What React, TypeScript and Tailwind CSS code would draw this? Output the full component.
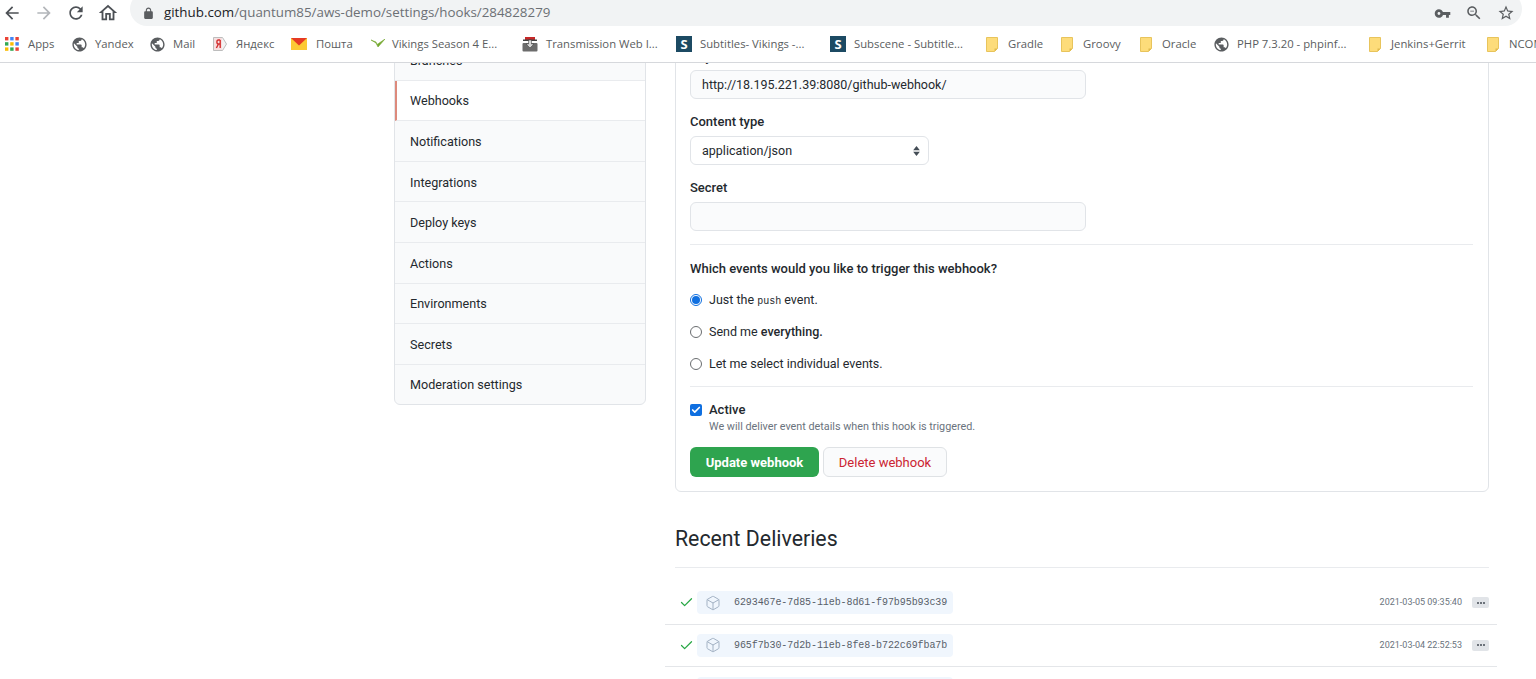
import React from "react"
import { Check, Box } from "lucide-react"

const ui = "font-['Open_Sans','Noto_Sans',sans-serif]"
const body = "font-['Roboto','Open_Sans',sans-serif]"

const Mat = ({ d, className }: { d: string; className: string }) => (
	<svg viewBox="0 0 24 24" className={className} fill="currentColor">
		<path d={d} />
	</svg>
)

const paths = {
	back: "M20 11H7.83l5.59-5.59L12 4l-8 8 8 8 1.41-1.41L7.83 13H20v-2z",
	forward: "M12 4l-1.41 1.41L16.17 11H4v2h12.17l-5.58 5.59L12 20l8-8z",
	reload:
		"M17.65 6.35C16.2 4.9 14.21 4 12 4c-4.42 0-7.99 3.58-7.99 8s3.57 8 7.99 8c3.73 0 6.84-2.55 7.73-6h-2.08c-.82 2.33-3.04 4-5.65 4-3.31 0-6-2.69-6-6s2.69-6 6-6c1.66 0 3.14.69 4.22 1.78L13 11h7V4l-2.35 2.35z",
	home: "M12 5.69l5 4.5V18h-2v-6H9v6H7v-7.81l5-4.5M12 3L2 12h3v8h6v-6h2v6h6v-8h3L12 3z",
	lock: "M18 8h-1V6c0-2.76-2.24-5-5-5S7 3.24 7 6v2H6c-1.1 0-2 .9-2 2v10c0 1.1.9 2 2 2h12c1.1 0 2-.9 2-2V10c0-1.1-.9-2-2-2zM9 6c0-1.66 1.34-3 3-3s3 1.34 3 3v2H9V6z",
	key: "M12.65 10C11.83 7.67 9.61 6 7 6c-3.31 0-6 2.69-6 6s2.69 6 6 6c2.61 0 4.83-1.67 5.65-4H17v4h4v-4h2v-4H12.65zM7 14c-1.1 0-2-.9-2-2s.9-2 2-2 2 .9 2 2-.9 2-2 2z",
	zoom: "M15.5 14h-.79l-.28-.27C15.41 12.59 16 11.11 16 9.5 16 5.91 13.09 3 9.5 3S3 5.91 3 9.5 5.91 16 9.5 16c1.61 0 3.09-.59 4.23-1.57l.27.28v.79l5 4.99L20.49 19l-4.99-5zm-6 0C7.01 14 5 11.99 5 9.5S7.01 5 9.5 5 14 7.01 14 9.5 11.99 14 9.5 14zM7 9h5v1H7z",
	star: "M22 9.24l-7.19-.62L12 2 9.19 8.63 2 9.24l5.46 4.73L5.82 21 12 17.27 18.18 21l-1.63-7.03L22 9.24zM12 15.4l-3.76 2.27 1-4.28-3.32-2.88 4.38-.38L12 6.1l1.71 4.04 4.38.38-3.32 2.88 1 4.28L12 15.4z",
	globe: "M12 2C6.48 2 2 6.48 2 12s4.48 10 10 10 10-4.48 10-10S17.52 2 12 2zm-1 17.93c-3.95-.49-7-3.85-7-7.93 0-.62.08-1.21.21-1.79L9 15v1c0 1.1.9 2 2 2v1.93zm6.9-2.54c-.26-.81-1-1.39-1.9-1.39h-1v-3c0-.55-.45-1-1-1H8v-2h2c.55 0 1-.45 1-1V7h2c1.1 0 2-.9 2-2v-.41c2.93 1.19 5 4.06 5 7.41 0 2.08-.8 3.97-2.1 5.39z",
}

const AppsIcon = () => (
	<svg viewBox="0 0 14 14" className="size-[14px] shrink-0">
		<rect x="0" y="0" width="3.4" height="3.4" fill="#ea4335" />
		<rect x="5.2" y="0" width="3.4" height="3.4" fill="#4285f4" />
		<rect x="10.4" y="0" width="3.4" height="3.4" fill="#ea4335" />
		<rect x="0" y="5.2" width="3.4" height="3.4" fill="#34a853" />
		<rect x="5.2" y="5.2" width="3.4" height="3.4" fill="#fbbc05" />
		<rect x="10.4" y="5.2" width="3.4" height="3.4" fill="#4285f4" />
		<rect x="0" y="10.4" width="3.4" height="3.4" fill="#fbbc05" />
		<rect x="5.2" y="10.4" width="3.4" height="3.4" fill="#34a853" />
		<rect x="10.4" y="10.4" width="3.4" height="3.4" fill="#ea4335" />
	</svg>
)

const Globe = () => <Mat d={paths.globe} className="size-[17px] shrink-0 text-[#5a5d60]" />

const YandexIcon = () => (
	<svg viewBox="0 0 16 16" className="size-4 shrink-0">
		<path d="M1.5 1.5h9l4 6.5-4 6.5h-9z" fill="#f3f3f3" stroke="#bdbdbd" />
		<rect x="2" y="2" width="8" height="12" fill="#f7dfe0" />
		<path d="M8.2 4v8M8.2 4H6.4C4.4 4 4.4 8 6.4 8h1.8M6.4 8l-2 4" fill="none" stroke="#d32f2f" strokeWidth="1.4" />
	</svg>
)

const MailIcon = () => (
	<svg viewBox="0 0 16 12" className="h-3 w-4 shrink-0">
		<rect width="16" height="12" fill="#fcc934" />
		<path d="M0 0h16L8 7.5z" fill="#e53924" />
	</svg>
)

const VikingsIcon = () => (
	<svg viewBox="0 0 14 10" className="h-[10px] w-[14px] shrink-0">
		<path d="M0 1l5 3 2 4 7-8-6.5 4.5L6 5.5 5 3z" fill="#74a82f" stroke="#74a82f" strokeWidth="0.6" />
	</svg>
)

const TransmissionIcon = () => (
	<svg viewBox="0 0 16 16" className="size-4 shrink-0">
		<rect x="0.5" y="7" width="15" height="8.5" rx="1" fill="#6c6c6c" />
		<rect x="3" y="1" width="10" height="3" fill="#c62828" />
		<rect x="1" y="3.5" width="14" height="1.5" fill="#444" />
		<path d="M6.5 4h3v4h2.5L8 12 4 8h2.5z" fill="#d8d8d8" stroke="#333" strokeWidth="0.5" />
	</svg>
)

const SubIcon = () => (
	<span className="flex size-4 shrink-0 items-center justify-center bg-[#1c4a63] text-[13px] leading-none font-bold text-white">
		S
	</span>
)

const NoteIcon = () => (
	<svg viewBox="0 0 12 15" className="h-[15px] w-3 shrink-0">
		<path d="M0.5 0.5h11v11l-3 3h-8z" fill="#fdd663" fillOpacity="0.85" stroke="#e8c45c" />
		<path d="M11.5 11.5h-3v3z" fill="#e0b94c" />
	</svg>
)

const bookmarks = [
	{ label: "Apps", icon: <AppsIcon />, cls: "w-[71px] gap-[9px] pl-[5px]" },
	{ label: "Yandex", icon: <Globe />, cls: "w-[78px] gap-[7px]" },
	{ label: "Mail", icon: <Globe />, cls: "w-[63px] gap-[7px]" },
	{ label: "Яндекс", icon: <YandexIcon />, cls: "w-[79px] gap-[8px]" },
	{ label: "Пошта", icon: <MailIcon />, cls: "w-[80px] gap-[9px]" },
	{ label: "Vikings Season 4 E...", icon: <VikingsIcon />, cls: "w-[151px] gap-[7px]" },
	{ label: "Transmission Web I...", icon: <TransmissionIcon />, cls: "w-[154px] gap-[8px]" },
	{ label: "Subtitles- Vikings -...", icon: <SubIcon />, cls: "w-[154px] gap-[8px]" },
	{ label: "Subscene - Subtitle...", icon: <SubIcon />, cls: "w-[156px] gap-[8px]" },
	{ label: "Gradle", icon: <NoteIcon />, cls: "w-[75px] gap-[10px]" },
	{ label: "Groovy", icon: <NoteIcon />, cls: "w-[79px] gap-[10px]" },
	{ label: "Oracle", icon: <NoteIcon />, cls: "w-[73px] gap-[10px]" },
	{ label: "PHP 7.3.20 - phpinf...", icon: <Globe />, cls: "w-[156px] gap-[7px]" },
	{ label: "Jenkins+Gerrit", icon: <NoteIcon />, cls: "w-[118px] gap-[10px]" },
	{ label: "NCOM", icon: <NoteIcon />, cls: "w-[60px] gap-[10px]" },
]

const BrowserBar = () => (
	<div className={`${ui} shrink-0 border-b border-[#d6d8dc] bg-white`}>
		<div className="flex h-[26px] items-center overflow-hidden">
			<div className="-mt-px flex w-[130px] shrink-0 items-center pl-[2px]">
				<Mat d={paths.back} className="size-5 text-[#4d5156]" />
				<Mat d={paths.forward} className="ml-3 size-5 text-[#b3b6ba]" />
				<Mat d={paths.reload} className="ml-3 size-5 text-[#4d5156]" />
				<Mat d={paths.home} className="ml-[11px] size-[22px] text-[#4d5156]" />
			</div>
			<div className="-mt-2 flex h-[34px] w-[1392px] shrink-0 items-center rounded-full bg-[#f1f3f4] pt-2 pr-[7px] pl-[12px]">
				<Mat d={paths.lock} className="size-[13px] text-[#5a5d60]" />
				<span className="ml-[9px] text-[13.35px] leading-none text-[#6c7075]">
					<span className="text-[#202124]">github.com</span>/quantum85/aws-demo/settings/hooks/284828279
				</span>
				<div className="ml-auto flex items-center gap-[14px]">
					<Mat d={paths.key} className="size-[17px] text-[#5a5d60]" />
					<Mat d={paths.zoom} className="size-[18px] text-[#5a5d60]" />
					<Mat d={paths.star} className="size-[18px] text-[#5a5d60]" />
				</div>
			</div>
		</div>
		<div className="flex h-[36px] items-center overflow-hidden whitespace-nowrap">
			{bookmarks.map((b) => (
				<div key={b.label} className={`flex shrink-0 items-center text-[11.3px] text-[#5a5d60] ${b.cls}`}>
					{b.icon}
					<span>{b.label}</span>
				</div>
			))}
		</div>
	</div>
)

const menu = ["Branches", "Webhooks", "Notifications", "Integrations", "Deploy keys", "Actions", "Environments", "Secrets", "Moderation settings"]

const Sidebar = () => (
	<div className="w-[252px] shrink-0 self-start rounded-b-md border border-[#e1e4e8] bg-[#f9fafb]">
		{menu.map((item) => (
			<div
				key={item}
				className={`flex h-[40.6px] items-center border-b border-[#e9ebee] pt-[3px] text-[12.6px] text-[#24292e] last:h-[39px] last:border-b-0 ${
					item === "Webhooks" ? "border-l-2 border-l-[#dd8a7c] bg-white pl-[13px]" : "pl-[15px]"
				}`}>
				{item}
			</div>
		))}
	</div>
)

const fieldCls = "flex h-[29px] items-center rounded-md border border-[#e1e4e8] px-[11px] pt-px text-[12.5px] text-[#24292e]"

const Radio = ({ checked, children }: { checked?: boolean; children: React.ReactNode }) => (
	<div className="flex h-[18px] items-center gap-[7px] text-[12.5px] text-[#24292e]">
		{checked ? (
			<span className="flex size-3 items-center justify-center rounded-full border border-[#0f6fe0] bg-white">
				<span className="size-2 rounded-full bg-[#0f6fe0]" />
			</span>
		) : (
			<span className="size-3 rounded-full border border-[#6a6d70] bg-white" />
		)}
		<span>{children}</span>
	</div>
)

const labelCls = "text-[13px] leading-[18px] font-medium text-[#24292e]"

const WebhookForm = () => (
	<div className="rounded-b-md border border-[#e1e4e8] pr-[15px] pb-[14px] pl-[14px]">
		<div className="flex h-[30px] items-end pb-[4px] text-[13px] font-medium text-[#24292e]">Payload URL</div>
		<div className={`${fieldCls} w-[396px] bg-[#fafbfc]`}>http://18.195.221.39:8080/github-webhook/</div>
		<div className={`mt-[14px] ${labelCls}`}>Content type</div>
		<div className={`${fieldCls} mt-[5px] w-[239px] justify-between bg-white pr-[8px]`}>
			application/json
			<svg viewBox="0 0 8 12" className="h-[10px] w-[7px] text-[#444d56]" fill="currentColor">
				<path d="M4 0l4 5H0zM4 12L0 7h8z" />
			</svg>
		</div>
		<div className={`mt-[14px] ${labelCls}`}>Secret</div>
		<div className={`${fieldCls} mt-[5px] w-[396px] bg-[#fafbfc]`} />
		<div className="mt-[13px] border-t border-[#e9ebee]" />
		<div className={`mt-[15px] ${labelCls}`}>Which events would you like to trigger this webhook?</div>
		<div className="mt-[13px] flex flex-col gap-[14px]">
			<Radio checked>
				Just the <span className="font-['Liberation_Mono',monospace] text-[10px]">push</span> event.
			</Radio>
			<Radio>
				Send me <span className="font-medium">everything.</span>
			</Radio>
			<Radio>Let me select individual events.</Radio>
		</div>
		<div className="mt-[13px] border-t border-[#e9ebee]" />
		<div className={`mt-[14px] flex h-[18px] items-center gap-[7px] ${labelCls}`}>
			<span className="flex size-3 items-center justify-center rounded-[2px] bg-[#0f6fe0]">
				<Check className="size-[10px] text-white" strokeWidth={4} />
			</span>
			Active
		</div>
		<div className="mt-px pl-[19px] text-[10.8px] leading-[14px] text-[#6a737d]">We will deliver event details when this hook is triggered.</div>
		<div className="mt-[13px] flex gap-[4px]">
			<div className="flex h-[30px] w-[129px] items-center justify-center rounded-md bg-[#2ea44f] pt-px text-[13px] font-bold text-white">Update webhook</div>
			<div className="flex h-[30px] w-[124px] items-center justify-center rounded-md border border-[#dfe2e5] bg-[#fafbfc] pt-px text-[13px] text-[#cb2431]">Delete webhook</div>
		</div>
	</div>
)

const deliveries = [
	{ id: "6293467e-7d85-11eb-8d61-f97b95b93c39", at: "2021-03-05 09:35:40" },
	{ id: "965f7b30-7d2b-11eb-8fe8-b722c69fba7b", at: "2021-03-04 22:52:53" },
]

const Delivery = ({ id, at }: { id: string; at: string }) => (
	<div className="flex h-[42.5px] items-center border-b border-[#e4e6e9] pr-[8px] pl-[14px]">
		<Check className="size-[15px] text-[#28a745]" strokeWidth={2} />
		<div className="ml-[3px] flex h-[23px] w-[256px] items-center rounded-[4px] bg-[#f0f6fd] pl-[8px]">
			<Box className="size-[16px] text-[#a3b2c4]" strokeWidth={1.5} />
			<span className="ml-[13px] font-['Liberation_Mono',monospace] text-[10px] tracking-[-0.08px] text-[#586069]">{id}</span>
		</div>
		<span className="ml-auto text-[9px] text-[#6a737d]">{at}</span>
		<span className="ml-[10px] flex h-[11px] w-[17px] items-center justify-center gap-px rounded-[2px] bg-[#e1e4e8]">
			<span className="size-[2px] rounded-full bg-[#444d56]" />
			<span className="size-[2px] rounded-full bg-[#444d56]" />
			<span className="size-[2px] rounded-full bg-[#444d56]" />
		</span>
	</div>
)

const RecentDeliveries = () => (
	<div>
		<h2 className="mt-[30px] h-[46px] border-b border-[#e9ebee] pt-px text-[21.3px] leading-[32px] text-[#24292e]">Recent Deliveries</h2>
		<div className="mt-[14px] -mr-[8px] -ml-[10px]">
			{deliveries.map((d) => (
				<Delivery key={d.id} {...d} />
			))}
			<div className="mt-[10px] ml-[32px] h-[23px] w-[256px] rounded-[4px] bg-[#f0f6fd]" />
		</div>
	</div>
)

export default function App() {
	return (
		<div className={`${ui} flex h-screen flex-col overflow-hidden bg-white`}>
			<BrowserBar />
			<div className={`${body} flex-1 overflow-hidden`}>
				<div className="-mt-[24px] flex gap-[29px] pl-[394px]">
					<Sidebar />
					<div className="w-[814px] shrink-0">
						<WebhookForm />
						<RecentDeliveries />
					</div>
				</div>
			</div>
		</div>
	)
}
